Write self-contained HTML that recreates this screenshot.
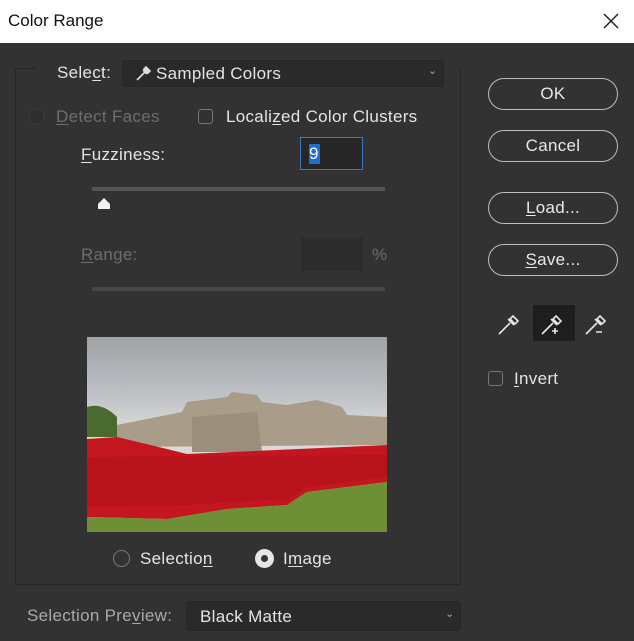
<!DOCTYPE html>
<html><head><style>
body{margin:0;width:634px;height:641px;background:#323232;font-family:"Liberation Sans",sans-serif;overflow:hidden;position:relative;color:#e4e4e4;font-size:17px;letter-spacing:0.3px}
.a{position:absolute}
.title{left:0;top:0;width:634px;height:43px;background:#fff;color:#111;letter-spacing:0}
.btn{position:absolute;left:488px;width:130px;height:32px;border:1px solid #bdbdbd;border-radius:17px;box-sizing:border-box;text-align:center;line-height:30px;font-size:17px;color:#e8e8e8}
.cb{position:absolute;width:15px;height:15px;border:1px solid #777;border-radius:3px;box-sizing:border-box}
u{text-decoration:underline;text-underline-offset:2px}
.dis{color:#6d6d6d}
</style></head><body>
<div class="a title"><span class="a" style="left:8px;top:11px;font-size:17px">Color Range</span>
<svg class="a" style="left:602px;top:12px" width="18" height="18"><path d="M2 2L16 16M16 2L2 16" stroke="#222" stroke-width="1.5"/></svg></div>
<div class="a" style="left:15px;top:68px;width:446px;height:517px;border:1px solid #262626;border-top:none;box-sizing:border-box"></div>
<div class="a" style="left:15px;top:68px;width:22px;border-top:1px solid #262626"></div>
<div class="a" style="left:57px;top:63px">Sele<u>c</u>t:</div>
<div class="a" style="left:122px;top:60px;width:322px;height:27px;background:#2a2a2a;border:1px solid #262626;border-radius:4px;box-sizing:border-box"></div>
<svg class="a" style="left:134px;top:64px" width="18" height="18"><path d="M3 16L11 8M9 6L13 10M12 3L16 7L14 9L10 5Z" stroke="#ddd" stroke-width="1.6" fill="#ddd"/></svg>
<div class="a" style="left:156px;top:64px">Sampled Colors</div>
<div class="a" style="left:428px;top:64px;font-size:11px;color:#aaa">&#8964;</div>
<div class="cb" style="left:29px;top:109px;border-color:#3a3a3a;background:#2e2e2e"></div>
<div class="a dis" style="left:56px;top:107px"><u>D</u>etect Faces</div>
<div class="cb" style="left:198px;top:109px"></div>
<div class="a" style="left:226px;top:107px">Locali<u>z</u>ed Color Clusters</div>
<div class="a" style="left:81px;top:145px"><u>F</u>uzziness:</div>
<div class="a" style="left:300px;top:137px;width:63px;height:33px;border:1px solid #3b78c4;background:#262626;box-sizing:border-box"></div>
<div class="a" style="left:309px;top:144px;width:11px;height:20px;background:#1f6fcf;color:#fff;font-size:17px;line-height:20px">9</div>
<div class="a" style="left:92px;top:187px;width:293px;height:4px;background:#555"></div>
<svg class="a" style="left:96px;top:195px" width="16" height="16"><path d="M2 14L2 9L8 3L14 9L14 14Z" fill="#f2f2f2"/></svg>
<div class="a dis" style="left:81px;top:245px"><u>R</u>ange:</div>
<div class="a" style="left:301px;top:238px;width:62px;height:33px;background:#2c2c2c"></div>
<div class="a dis" style="left:372px;top:245px">%</div>
<div class="a" style="left:92px;top:287px;width:293px;height:4px;background:#474747"></div>
<svg class="a" style="left:87px;top:337px" width="300" height="195">
<defs><linearGradient id="s" x1="0" y1="0" x2="0" y2="1"><stop offset="0" stop-color="#9fa3a6"/><stop offset="0.25" stop-color="#b8bcc0"/><stop offset="0.5" stop-color="#dcdcdc"/><stop offset="1" stop-color="#c8c8c8"/></linearGradient></defs>
<rect width="300" height="195" fill="url(#s)"/>
<path d="M0 70 Q15 65 30 80 L30 100 L0 100Z" fill="#4a6a30"/>
<path d="M30 88 L95 75 L100 65 L140 60 L145 55 L170 58 L175 65 L200 68 L230 63 L255 70 L260 78 L300 80 L300 108 L30 110Z" fill="#a99c88"/>
<path d="M105 80 L170 75 L175 115 L105 115Z" fill="#9b8f7c"/>
<path d="M0 102 L30 100 L80 112 L100 117 L300 108 L300 145 L260 150 L220 155 L200 168 L140 172 L80 182 L0 180Z" fill="#c4161e"/>
<path d="M0 120 L300 118 L300 140 L220 150 L200 162 L100 168 L0 170Z" fill="#b0111a" opacity="0.6"/>
<path d="M0 180 L80 182 L140 172 L200 168 L220 155 L260 150 L300 145 L300 195 L0 195Z" fill="#6f8f36"/>
</svg>
<div class="a" style="left:113px;top:550px;width:17px;height:17px;border:1px solid #777;border-radius:50%;box-sizing:border-box"></div>
<div class="a" style="left:140px;top:549px">Selectio<u>n</u></div>
<div class="a" style="left:255px;top:549px;width:19px;height:19px;border-radius:50%;background:#e6e6e6"></div>
<div class="a" style="left:261px;top:555px;width:7px;height:7px;border-radius:50%;background:#333"></div>
<div class="a" style="left:283px;top:549px">I<u>m</u>age</div>
<div class="a" style="left:27px;top:606px;color:#a8a8a8">Selection Pre<u>v</u>iew:</div>
<div class="a" style="left:186px;top:601px;width:275px;height:30px;background:#2a2a2a;border:1px solid #262626;border-radius:4px;box-sizing:border-box"></div>
<div class="a" style="left:200px;top:607px">Black Matte</div>
<div class="a" style="left:445px;top:607px;font-size:11px;color:#aaa">&#8964;</div>
<div class="btn" style="top:78px">OK</div>
<div class="btn" style="top:130px">Cancel</div>
<div class="btn" style="top:192px"><u>L</u>oad...</div>
<div class="btn" style="top:244px"><u>S</u>ave...</div>
<div class="a" style="left:533px;top:305px;width:42px;height:36px;background:#1e1e1e"></div>
<svg class="a" style="left:495px;top:310px" width="130" height="28">
<g stroke="#e6e6e6" stroke-width="1.6" fill="none">
<path d="M4 24L15 13M13 9L19 15M18 6L23 11L20 14L15 9Z"/>
<path d="M47 24L58 13M56 9L62 15M61 6L66 11L63 14L58 9Z"/>
<path d="M91 24L102 13M100 9L106 15M105 6L110 11L107 14L102 9Z"/>
<path d="M57 21h6M60 18v6M101 22h6"/></g></svg>
<div class="cb" style="left:488px;top:371px"></div>
<div class="a" style="left:514px;top:369px"><u>I</u>nvert</div>
</body></html>
